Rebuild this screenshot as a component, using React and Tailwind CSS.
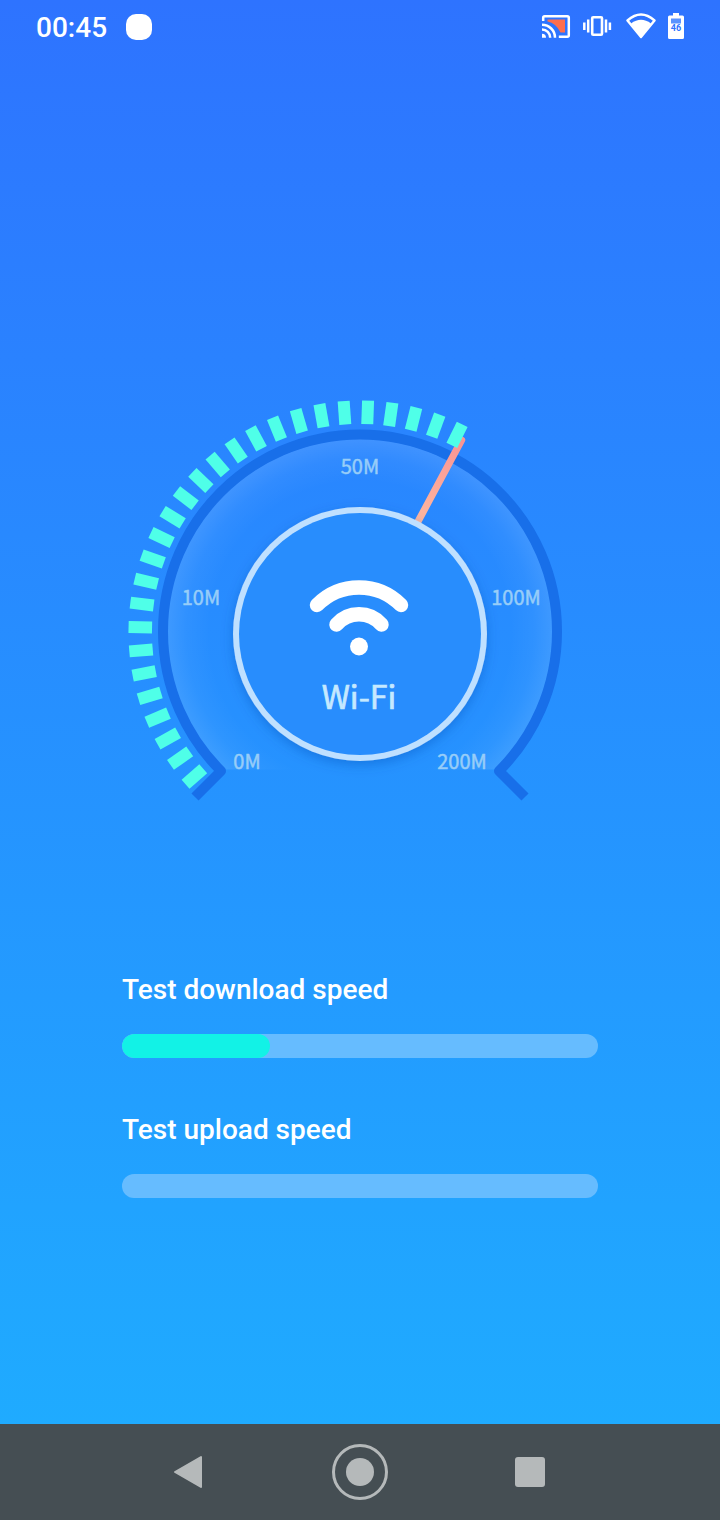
const TICK_COUNT = 27;
const TICK_START = -131.1;
const TICK_STEP = 6.05;

const labels = [
  { text: "0M", x: 247, y: 769 },
  { text: "10M", x: 201, y: 605 },
  { text: "50M", x: 360, y: 474 },
  { text: "100M", x: 516, y: 605 },
  { text: "200M", x: 462, y: 769 },
];

const tests = [
  { name: "Test download speed", progress: 31 },
  { name: "Test upload speed", progress: 0 },
];

function StatusBar() {
  return (
    <header className="flex h-[54px] shrink-0 items-center pr-[35px] pl-9 text-white">
      <span className="pt-0.5 text-[28px] leading-none font-medium">00:45</span>
      <span className="ml-[19px] size-[26px] rounded-[10px] bg-white" />
      <svg className="ml-auto" width="144" height="34" viewBox="541 10 144 34" fill="none">
        {/* cast */}
        <path d="M547.500 19.500h17.500v13H560.500Q556 23 547.500 21.500z" fill="#ff6e4e" />
        <path
          d="M543.200 21v-3.300q0-1.500 1.500-1.500h22.600q1.500 0 1.500 1.500v17.600q0 1.500-1.500 1.500h-8.500"
          stroke="white"
          strokeWidth="2.500"
        />
        <path
          d="M542 24.700a13 13 0 0 1 13 13M542 29.500a8.200 8.200 0 0 1 8.200 8.200"
          stroke="white"
          strokeWidth="2.500"
        />
        <path d="M542 33.700a4 4 0 0 1 4 4h-4z" fill="white" />
        {/* vibrate */}
        <rect x="592.200" y="17.200" width="9.800" height="17.600" rx="1" stroke="white" strokeWidth="2.600" />
        <path d="M588.200 19.500v13M606 19.500v13M584.300 22.500v7.500M609.900 22.500v7.500" stroke="white" strokeWidth="2.500" />
        {/* wifi */}
        <path
          d="M627.500 20.500Q641 8.500 654.500 20.500L641 37Z"
          stroke="white"
          strokeWidth="2.400"
          strokeLinejoin="round"
        />
        <path d="M631 23.500Q641 16 651 23.500L641 37Z" fill="white" />
        {/* battery */}
        <path d="M673 13h6v2.500h3.500q1.500 0 1.500 1.500v20.500q0 1.500-1.500 1.500h-13q-1.500 0-1.500-1.500V17q0-1.500 1.500-1.500h3.500z" fill="white" />
        <path d="M671 18.500h10v5h-10z" fill="#5b93ff" />
        <text x="676" y="31" textAnchor="middle" fontSize="9" fontWeight="700" fill="#2e74ff">
          46
        </text>
      </svg>
    </header>
  );
}

function Gauge() {
  const ticks = Array.from({ length: TICK_COUNT }, (_, i) => TICK_START + i * TICK_STEP);

  return (
    <svg width="480" height="440" viewBox="120 380 480 440" fill="none">
      <defs>
        <radialGradient id="glow" gradientUnits="userSpaceOnUse" cx="360" cy="632" r="193">
          <stop offset="0.780" stopColor="#fff" stopOpacity="0" />
          <stop offset="0.900" stopColor="#fff" stopOpacity="0.040" />
          <stop offset="1" stopColor="#fff" stopOpacity="0.110" />
        </radialGradient>
        <linearGradient id="needle" gradientUnits="userSpaceOnUse" x1="461" y1="440" x2="418" y2="521">
          <stop stopColor="#f99494" />
          <stop offset="1" stopColor="#ffb79f" />
        </linearGradient>
        <clipPath id="dial">
          <rect x="160" y="430" width="400" height="339.500" />
        </clipPath>
        <filter id="shadow" x="-20%" y="-20%" width="140%" height="140%">
          <feDropShadow dx="0" dy="4" stdDeviation="6" floodColor="#0f4fb8" floodOpacity="0.400" />
        </filter>
      </defs>

      <circle cx="360" cy="632" r="193" fill="url(#glow)" clipPath="url(#dial)" />
      <path
        d="M195 797L221 771A197 197 0 1 1 499 771L525 797"
        stroke="#186fe9"
        strokeWidth="10"
        strokeLinejoin="round"
      />

      <path d="M418.300 521L461.700 440" stroke="url(#needle)" strokeWidth="7" strokeLinecap="round" />
      {ticks.map((angle) => (
        <rect
          key={angle}
          x="354"
          y="400.500"
          width="12"
          height="23.500"
          fill="#4fffe8"
          transform={`rotate(${angle} 360 632)`}
        />
      ))}

      <circle cx="360" cy="634" r="127" fill="#bfe0ff" filter="url(#shadow)" />
      <circle cx="360" cy="634" r="121" fill="#288dfd" />

      <g stroke="white" strokeWidth="14.500" strokeLinecap="round">
        <path d="M317 605A59 59 0 0 1 401 605" />
        <path d="M336.500 624.500A30 30 0 0 1 381.500 624.500" />
      </g>
      <circle cx="359" cy="646.500" r="9" fill="white" />

      <g className="font-['Noto_Sans_CJK_SC',sans-serif]" textAnchor="middle">
        <text x="359" y="709" fontSize="32" fill="#c5e9ff" stroke="#c5e9ff" strokeWidth="0.700">
          Wi-Fi
        </text>
        {labels.map((label) => (
          <text
            key={label.text}
            x={label.x}
            y={label.y}
            fontSize="20"
            fill="#98cdf8"
            stroke="#98cdf8"
            strokeWidth="0.500"
          >
            {label.text}
          </text>
        ))}
      </g>
    </svg>
  );
}

function SpeedBar({ name, progress }) {
  return (
    <div>
      <p className="text-[28px] leading-9 font-medium text-white">{name}</p>
      <div className="mt-[26px] h-6 overflow-hidden rounded-full bg-[#66bcff]">
        <div className="h-full rounded-full bg-[#12f2e6]" style={{ width: `${progress}%` }} />
      </div>
    </div>
  );
}

function NavBar() {
  return (
    <nav className="flex h-24 shrink-0 items-center justify-center bg-[#454e53]">
      <svg width="376" height="60" viewBox="172 1442 376 60" fill="none">
        <path
          d="M175 1472L201 1457V1487Z"
          fill="#b5b9ba"
          stroke="#b5b9ba"
          strokeWidth="2"
          strokeLinejoin="round"
        />
        <circle cx="360" cy="1472" r="26.500" stroke="#b5b9ba" strokeWidth="3" />
        <circle cx="360" cy="1472" r="14" fill="#b5b9ba" />
        <rect x="515" y="1457" width="30" height="30" rx="3" fill="#b5b9ba" />
      </svg>
    </nav>
  );
}

function App() {
  return (
    <div className="flex h-[1520px] w-[720px] flex-col overflow-hidden bg-[#454e53] font-[Roboto,sans-serif]">
      <div className="flex flex-1 flex-col bg-linear-to-b from-[#2e73ff] to-[#1fabff]">
        <StatusBar />
        <main className="flex flex-col items-center pt-[326px]">
          <Gauge />
          <section className="mt-[152px] flex w-[476px] flex-col gap-[54px]">
            {tests.map((test) => (
              <SpeedBar key={test.name} name={test.name} progress={test.progress} />
            ))}
          </section>
        </main>
      </div>
      <NavBar />
    </div>
  );
}

export default App;
